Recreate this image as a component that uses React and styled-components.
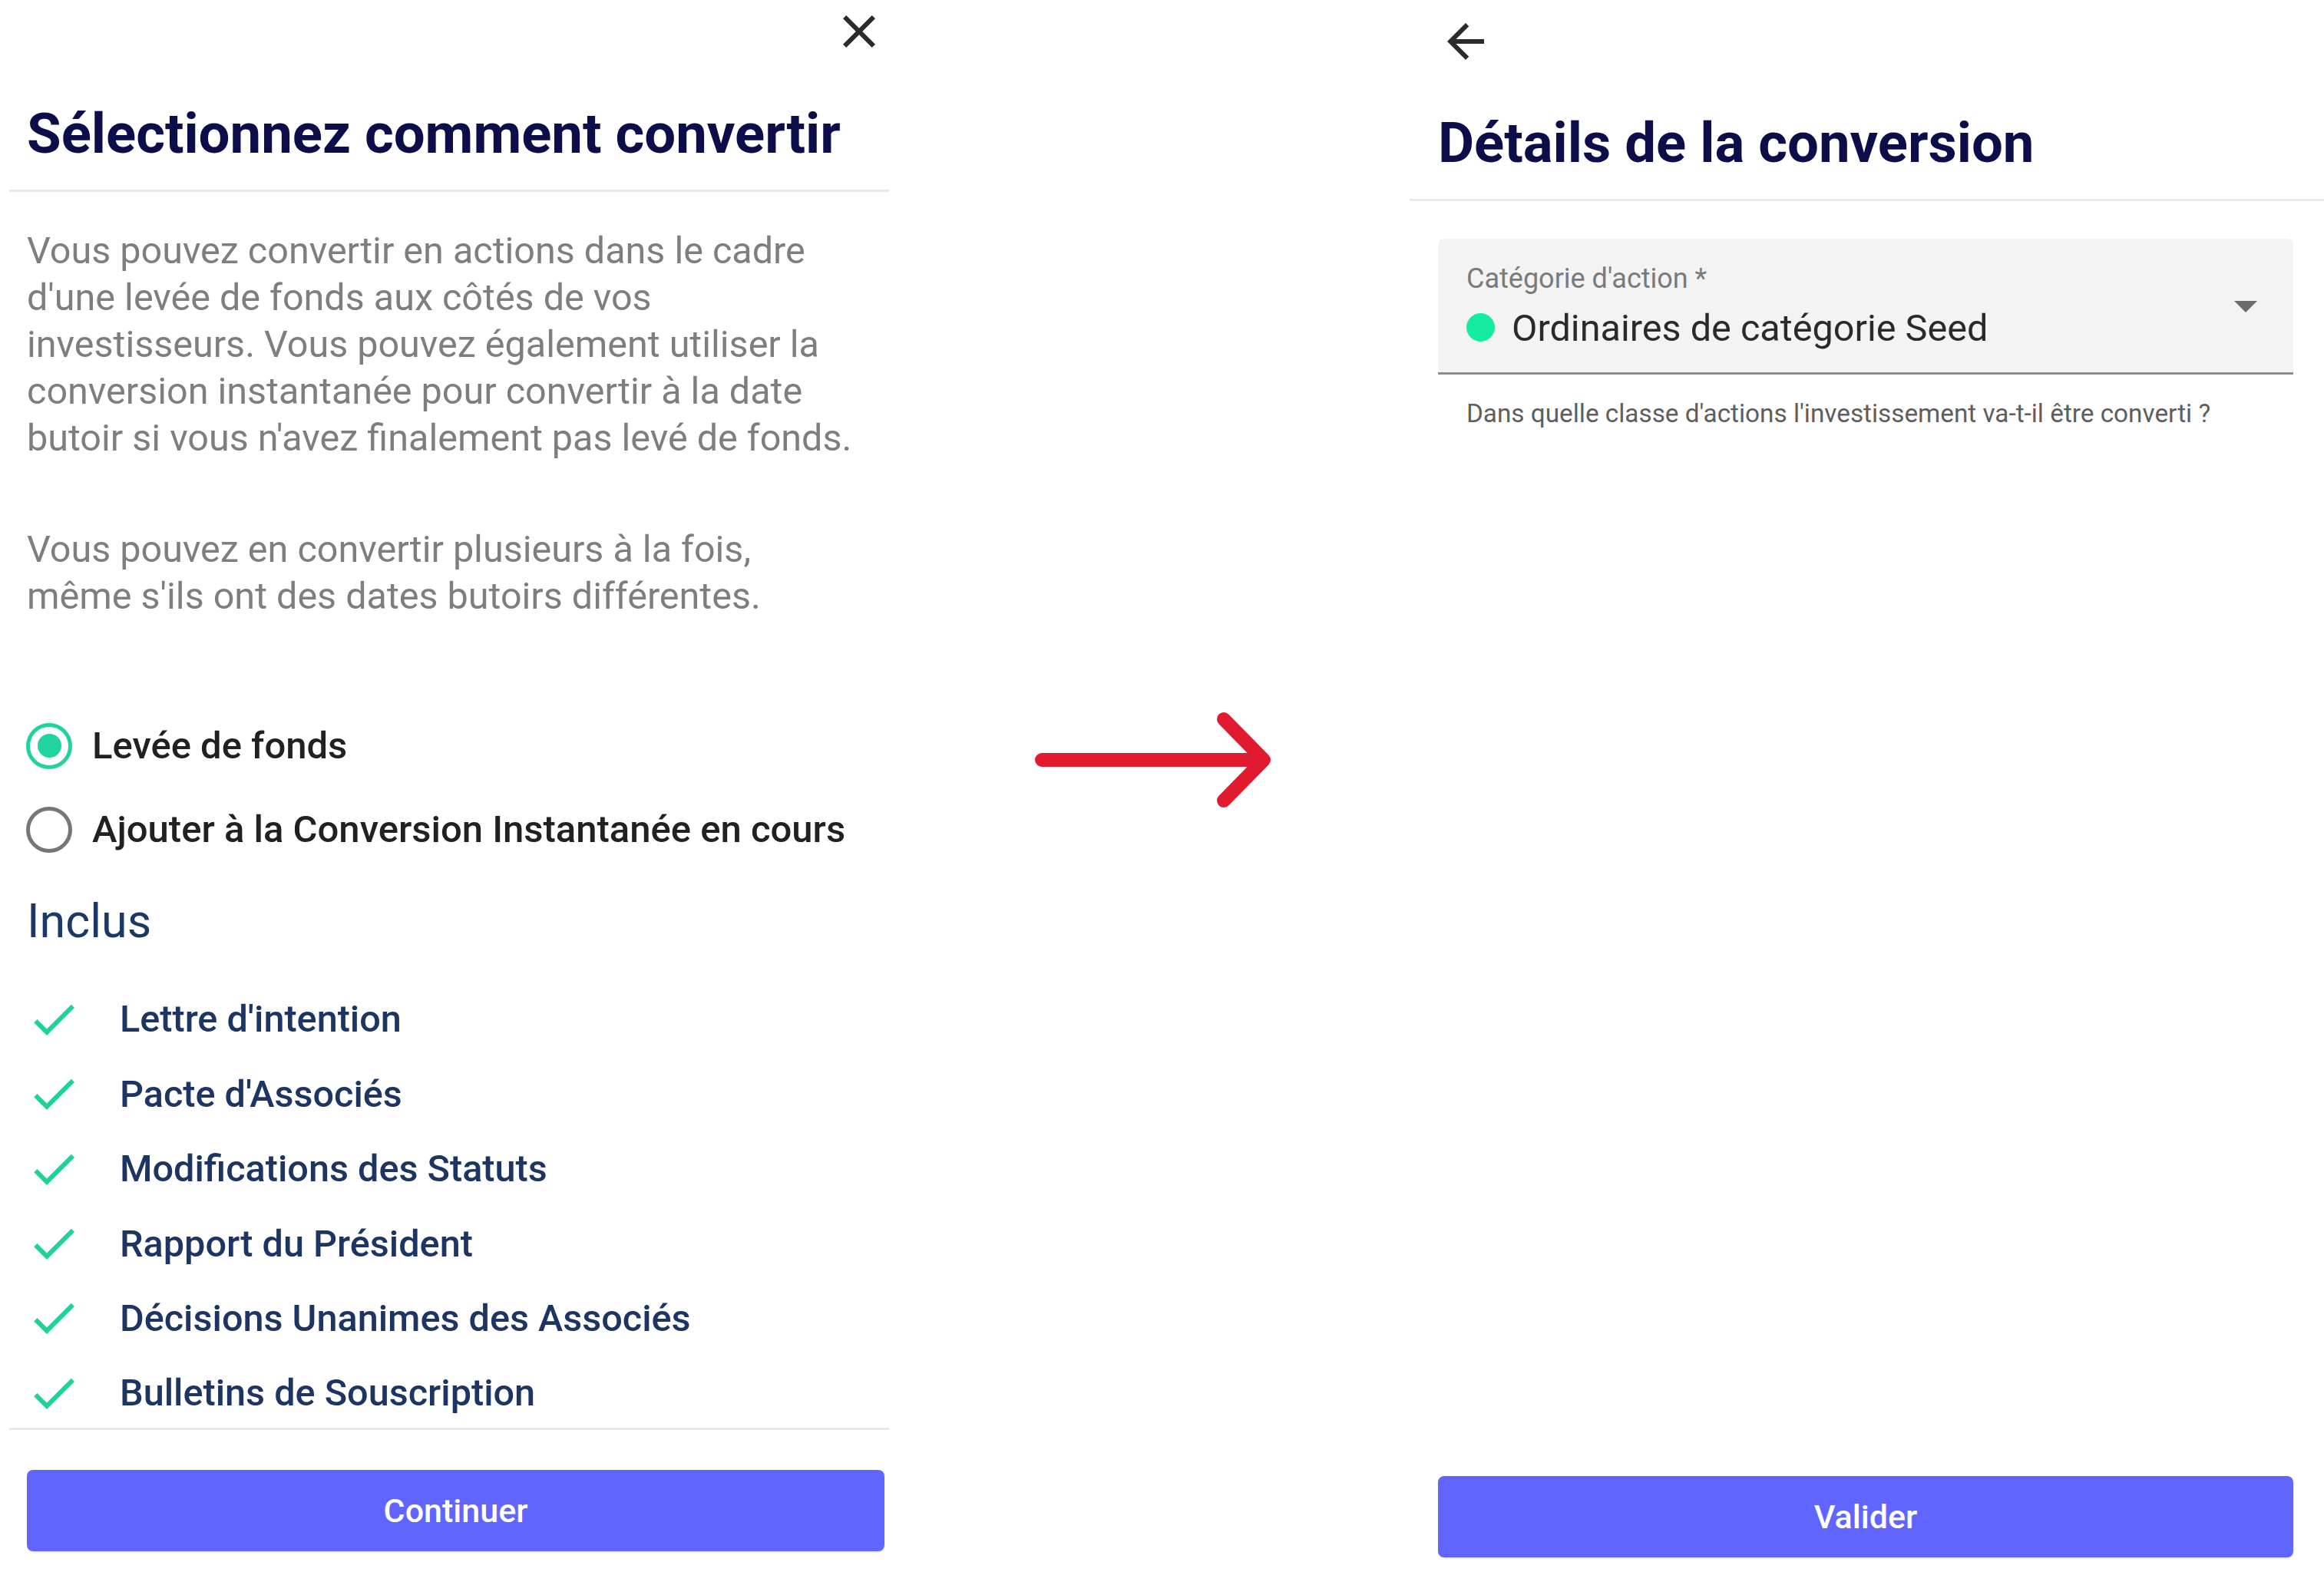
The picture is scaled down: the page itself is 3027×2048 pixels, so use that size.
import React from 'react';
import styled, { createGlobalStyle } from 'styled-components';

const GlobalStyle = createGlobalStyle`
  html, body {
    margin: 0;
    padding: 0;
    background: #fff;
    overflow: hidden;
  }
  * {
    box-sizing: border-box;
  }
  body {
    font-family: Roboto, "Liberation Sans", Arial, sans-serif;
  }
`;

const Page = styled.main`
  display: flex;
  height: 100vh;
  width: 100vw;
`;

const Panel = styled.section`
  width: ${p => p.$width}px;
  margin-left: ${p => p.$marginLeft || 0}px;
  height: 100vh;
  display: flex;
  flex-direction: column;
  flex-shrink: 0;
`;

const Header = styled.header`
  display: flex;
  flex-direction: column;
  padding: ${p => p.$top}px ${p => p.$right}px 29px ${p => p.$left}px;
  border-bottom: 3px solid #e8e8e8;
`;

const IconRow = styled.div`
  display: flex;
  justify-content: ${p => p.$align};
  height: 72px;
`;

const IconButton = styled.button`
  width: 72px;
  height: 72px;
  padding: 0;
  border: none;
  background: none;
  color: #2b2b2b;
  cursor: pointer;
  svg {
    display: block;
    width: 72px;
    height: 72px;
  }
`;

const Title = styled.h1`
  margin: ${p => p.$gap}px 0 0;
  font-size: 72.5px;
  line-height: 1.2;
  font-weight: 700;
  color: #0c0e4a;
`;

const Content = styled.div`
  flex: 1;
  overflow: hidden;
  padding: ${p => p.$top}px ${p => p.$right}px 0 ${p => p.$left}px;
`;

const Paragraph = styled.p`
  margin: ${p => (p.$spaced ? '84px' : '0')} 0 0;
  font-size: 48.5px;
  line-height: 61px;
  color: #7e7e7e;
  max-width: 1082px;
`;

const RadioGroup = styled.div`
  margin-top: 110px;
  display: flex;
  flex-direction: column;
`;

const RadioRow = styled.label`
  display: flex;
  align-items: center;
  gap: 26px;
  height: 109px;
  cursor: pointer;
`;

const RadioCircle = styled.span`
  width: 60px;
  height: 60px;
  margin-left: -1px;
  border-radius: 50%;
  border: 5px solid ${p => (p.$checked ? '#1fd49e' : '#767676')};
  display: flex;
  align-items: center;
  justify-content: center;
  flex-shrink: 0;
  &::after {
    content: '';
    display: ${p => (p.$checked ? 'block' : 'none')};
    width: 31px;
    height: 31px;
    border-radius: 50%;
    background: #1fd49e;
  }
`;

const RadioLabel = styled.span`
  font-size: 49px;
  font-weight: 500;
  color: #212121;
`;

const SectionTitle = styled.h2`
  margin: 29px 0 0;
  font-size: 61px;
  line-height: 1.2;
  font-weight: 400;
  color: #1c3866;
`;

const CheckList = styled.ul`
  list-style: none;
  margin: 42px 0 0;
  padding: 0;
`;

const CheckItem = styled.li`
  display: flex;
  align-items: center;
  gap: 50px;
  height: 97.4px;
  font-size: 48.6px;
  font-weight: 500;
  color: #1d3563;
  svg {
    width: 72px;
    height: 72px;
    margin-left: -1px;
    color: #1ed39b;
    flex-shrink: 0;
  }
`;

const Footer = styled.footer`
  padding: ${p => p.$top}px ${p => p.$right}px ${p => p.$bottom}px ${p => p.$left}px;
  border-top: ${p => (p.$divider ? '3px solid #e8e8e8' : 'none')};
`;

const PrimaryButton = styled.button`
  display: block;
  width: 100%;
  height: 106px;
  border: none;
  border-radius: 8px;
  background: #6165ff;
  color: #fff;
  font-family: Roboto, "Liberation Sans", Arial, sans-serif;
  font-size: 43px;
  font-weight: 500;
  cursor: pointer;
  box-shadow: 0 2px 2px rgba(0, 0, 0, 0.08);
`;

const Middle = styled.div`
  flex: 1;
  display: flex;
  align-items: center;
  justify-content: center;
  padding: 0 0 68px 8px;
`;

const SelectField = styled.div`
  display: flex;
  align-items: center;
  justify-content: space-between;
  height: 177px;
  padding: 0 26px 0 37px;
  background: #f3f3f3;
  border-radius: 8px 8px 0 0;
  border-bottom: 3px solid #8e8e8e;
`;

const FieldBody = styled.div`
  align-self: flex-start;
  display: flex;
  flex-direction: column;
  padding-top: 31px;
`;

const FieldLabel = styled.span`
  font-size: 36px;
  line-height: 1.2;
  color: #7a7a7a;
`;

const ValueRow = styled.div`
  display: flex;
  align-items: center;
  gap: 22px;
  margin-top: 14px;
  font-size: 48.6px;
  line-height: 1.2;
  color: #2a2a2a;
`;

const Dot = styled.span`
  width: 37px;
  height: 37px;
  margin-bottom: 4px;
  border-radius: 50%;
  background: ${p => p.$color};
  flex-shrink: 0;
`;

const DropIcon = styled.svg`
  width: 72px;
  height: 72px;
  color: #6b6b6b;
  flex-shrink: 0;
`;

const Helper = styled.p`
  margin: 31px 0 0 37px;
  font-size: 33.3px;
  line-height: 1.2;
  color: #5e5e5e;
`;

const CloseIcon = () => (
  <svg viewBox="0 0 24 24" fill="currentColor">
    <path d="M19 6.41 17.59 5 12 10.59 6.41 5 5 6.41 10.59 12 5 17.59 6.41 19 12 13.41 17.59 19 19 17.59 13.41 12z" />
  </svg>
);

const BackIcon = () => (
  <svg viewBox="0 0 24 24" fill="currentColor">
    <path d="M20 11H7.83l5.59-5.59L12 4l-8 8 8 8 1.41-1.41L7.83 13H20v-2z" />
  </svg>
);

const CheckIcon = () => (
  <svg viewBox="0 0 24 24" fill="currentColor">
    <path d="M9 16.17 4.83 12l-1.42 1.41L9 19 21 7l-1.41-1.41z" />
  </svg>
);

const included = [
  "Lettre d'intention",
  "Pacte d'Associés",
  'Modifications des Statuts',
  'Rapport du Président',
  'Décisions Unanimes des Associés',
  'Bulletins de Souscription',
];

const options = [
  { id: 'raise', label: 'Levée de fonds', checked: true },
  { id: 'instant', label: 'Ajouter à la Conversion Instantanée en cours', checked: false },
];

const App = () => {
  return (
    <>
      <GlobalStyle />
      <Page>
        <Panel $width={1146} $marginLeft={12}>
          <Header $top={5} $right={3} $left={23}>
            <IconRow $align="flex-end">
              <IconButton aria-label="Fermer">
                <CloseIcon />
              </IconButton>
            </IconRow>
            <Title $gap={54}>Sélectionnez comment convertir</Title>
          </Header>
          <Content $top={46} $right={6} $left={23}>
            <Paragraph>
              Vous pouvez convertir en actions dans le cadre d'une levée de fonds aux côtés de vos
              investisseurs. Vous pouvez également utiliser la conversion instantanée pour convertir
              à la date butoir si vous n'avez finalement pas levé de fonds.
            </Paragraph>
            <Paragraph $spaced>
              Vous pouvez en convertir plusieurs à la fois, même s'ils ont des dates butoirs
              différentes.
            </Paragraph>
            <RadioGroup>
              {options.map(opt => (
                <RadioRow key={opt.id}>
                  <RadioCircle $checked={opt.checked} />
                  <RadioLabel>{opt.label}</RadioLabel>
                </RadioRow>
              ))}
            </RadioGroup>
            <SectionTitle>Inclus</SectionTitle>
            <CheckList>
              {included.map(item => (
                <CheckItem key={item}>
                  <CheckIcon />
                  {item}
                </CheckItem>
              ))}
            </CheckList>
          </Content>
          <Footer $divider $top={52} $right={6} $bottom={27} $left={23}>
            <PrimaryButton>Continuer</PrimaryButton>
          </Footer>
        </Panel>

        <Middle>
          <svg width="330" height="140" viewBox="0 0 330 140" fill="none">
            <path
              d="M21 70H310M258 17L310 70L258 123"
              stroke="#e21a30"
              strokeWidth="18"
              strokeLinecap="round"
              strokeLinejoin="round"
            />
          </svg>
        </Middle>

        <Panel $width={1191}>
          <Header $top={18} $right={40} $left={37}>
            <IconRow $align="flex-start">
              <IconButton aria-label="Retour">
                <BackIcon />
              </IconButton>
            </IconRow>
            <Title $gap={53}>Détails de la conversion</Title>
          </Header>
          <Content $top={49} $right={40} $left={37}>
            <SelectField>
              <FieldBody>
                <FieldLabel>Catégorie d'action *</FieldLabel>
                <ValueRow>
                  <Dot $color="#14eca0" />
                  Ordinaires de catégorie Seed
                </ValueRow>
              </FieldBody>
              <DropIcon viewBox="0 0 24 24" fill="currentColor">
                <path d="M7 10l5 5 5-5z" />
              </DropIcon>
            </SelectField>
            <Helper>Dans quelle classe d'actions l'investissement va-t-il être converti ?</Helper>
          </Content>
          <Footer $top={0} $right={40} $bottom={19} $left={37}>
            <PrimaryButton>Valider</PrimaryButton>
          </Footer>
        </Panel>
      </Page>
    </>
  );
};

export default App;
